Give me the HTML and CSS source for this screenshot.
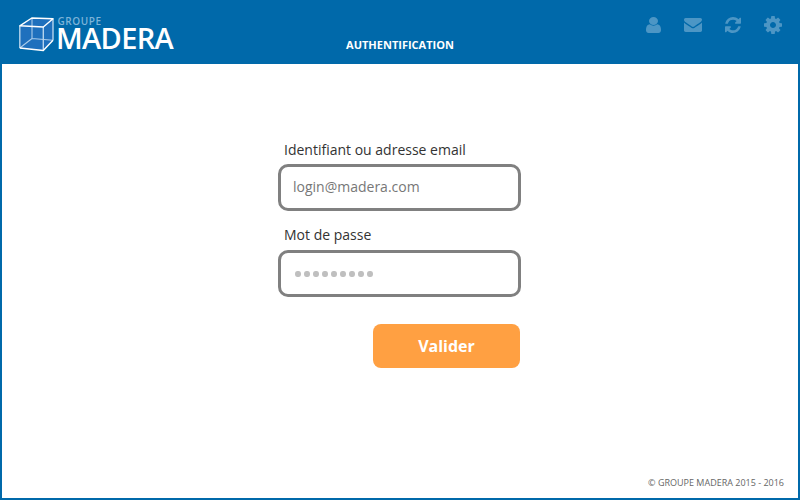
FILE: index.html
```html
<!DOCTYPE html>
<html lang="fr">
<head>
<meta charset="utf-8">
<title>Madera - Authentification</title>
<link rel="stylesheet" href="styles.css">
</head>
<body>
<div class="app">
  <header class="header">
    <div class="logo">
      <svg class="cube" viewBox="0 0 36 36">
        <path class="cube-fill" d="M1.800 9.800 13.800 2 35 2.800V24.200L25 34.500 1.800 32Z"/>
        <path class="cube-back" d="M14 2V22.500M1.800 32 14 22.500 35 24.200"/>
        <path class="cube-side" d="M1.800 9.800V32M25.300 11V34.500M35 2.800V24.200"/>
        <path class="cube-front" d="M1.800 9.800 13.800 2 35 2.800 25.300 11ZM1.800 32 25.300 34.500 35 24.200"/>
      </svg>
      <div class="brand">
        <span class="brand-group">GROUPE</span>
        <span class="brand-name">MADERA</span>
      </div>
    </div>
    <h1 class="title">AUTHENTIFICATION</h1>
    <nav class="tools">
      <svg class="icon icon-user" viewBox="256 128 1280 1536" preserveAspectRatio="none"><path d="M1536 1399q0 109-62.500 187t-150.500 78h-854q-88 0-150.500-78t-62.500-187q0-85 8.500-160.500t31.500-152 58.500-131 94-89 134.500-34.500q131 128 313 128t313-128q76 0 134.500 34.500t94 89 58.500 131 31.500 152 8.500 160.500zm-256-887q0 159-112.500 271.500t-271.500 112.500-271.500-112.500-112.500-271.500 112.500-271.500 271.500-112.500 271.500 112.500 112.500 271.500z"/></svg>
      <svg class="icon icon-mail" viewBox="0 256 1792 1408" preserveAspectRatio="none"><path d="M1792 710v794q0 66-47 113t-113 47h-1472q-66 0-113-47t-47-113v-794q44 49 101 87 362 246 497 345 57 42 92.500 65.500t94.500 48 110 24.500h2q51 0 110-24.500t94.500-48 92.500-65.500q170-123 498-345 57-39 100-87zm0-294q0 79-49 151t-122 123q-376 261-468 325-10 7-42.500 31t-54 38.500-52 32.500-57.500 27-50 9h-2q-23 0-50-9t-57.500-27-52-32.500-54-38.500-42.500-31q-91-64-262-182.500t-205-142.500q-62-42-117-115.500t-55-136.500q0-78 41.500-130t118.500-52h1472q65 0 112.500 47t47.500 113z"/></svg>
      <svg class="icon icon-sync" viewBox="128 128 1536 1536"><path d="M1639 1056q0 5-1 7-64 268-268 434.500t-478 166.500q-146 0-282.500-55t-243.500-157l-129 129q-19 19-45 19t-45-19-19-45v-448q0-26 19-45t45-19h448q26 0 45 19t19 45-19 45l-137 137q71 66 161 102t187 36q134 0 250-65t186-179q11-17 53-117 8-23 30-23h192q13 0 22.500 9.500t9.500 22.500zm25-800v448q0 26-19 45t-45 19h-448q-26 0-45-19t-19-45 19-45l138-138q-148-137-349-137-134 0-250 65t-186 179q-11 17-53 117-8 23-30 23h-199q-13 0-22.500-9.500t-9.500-22.500v-7q65-268 270-434.500t480-166.500q146 0 284 55.500t245 156.500l130-129q19-19 45-19t45 19 19 45z"/></svg>
      <svg class="icon icon-gear" viewBox="128 128 1536 1536"><path d="M1152 896q0-106-75-181t-181-75-181 75-75 181 75 181 181 75 181-75 75-181zm512-109v222q0 12-8 23t-20 13l-185 28q-19 54-39 91 35 50 107 138 10 12 10 25t-9 23q-27 37-99 108t-94 71q-12 0-26-9l-138-108q-44 23-91 38-16 136-29 186-7 28-36 28h-222q-14 0-24.500-8.500t-11.500-21.500l-28-184q-49-16-90-37l-141 107q-10 9-25 9-14 0-25-11-126-114-165-168-7-10-7-23 0-12 8-23 15-21 51-66.500t54-70.500q-27-50-41-99l-183-27q-13-2-21-12.500t-8-23.500v-222q0-12 8-23t19-13l186-28q14-46 39-92-40-57-107-138-10-12-10-24 0-10 9-23 26-36 98.500-107.500t94.500-71.500q13 0 26 10l138 107q44-23 91-38 16-136 29-186 7-28 36-28h222q14 0 24.500 8.500t11.500 21.500l28 184q49 16 90 37l142-107q9-9 24-9 13 0 25 10 129 119 165 170 7 8 7 22 0 12-8 23-15 21-51 66.500t-54 70.500q26 50 41 98l183 28q13 2 21 12.500t8 23.500z"/></svg>
    </nav>
  </header>
  <main class="main">
    <form class="form">
      <label class="label" for="login">Identifiant ou adresse email</label>
      <input class="field" id="login" type="text" placeholder="login@madera.com">
      <label class="label label-password" for="password">Mot de passe</label>
      <div class="field field-password" id="password">
        <i class="dot"></i><i class="dot"></i><i class="dot"></i><i class="dot"></i><i class="dot"></i><i class="dot"></i><i class="dot"></i><i class="dot"></i><i class="dot"></i>
      </div>
      <button class="submit" type="button">Valider</button>
    </form>
  </main>
  <footer class="footer">© GROUPE MADERA 2015 - 2016</footer>
</div>
</body>
</html>
```
FILE: styles.css
```css
* {
  box-sizing: border-box;
}

body {
  margin: 0;
  font-family: "Open Sans", sans-serif;
  background: #fff;
}

.app {
  display: flex;
  flex-direction: column;
  width: 800px;
  height: 500px;
  border: 2px solid #0069aa;
  border-top: 0;
}

.header {
  display: grid;
  grid-template-columns: 1fr auto 1fr;
  height: 64px;
  padding: 0 16px;
  background: #0069aa;
  color: #fff;
}

.logo {
  display: flex;
  align-items: flex-start;
  padding-top: 16px;
}

.cube {
  width: 36px;
  height: 36px;
  flex: none;
  fill: none;
  stroke-linejoin: round;
}

.cube-fill {
  fill: #1f70bd;
}

.cube-back {
  stroke: #a9cbea;
  stroke-width: 1.1;
}

.cube-side {
  stroke: #b5d3ec;
  stroke-width: 1.4;
}

.cube-front {
  stroke: #fff;
  stroke-width: 1.4;
}

.brand {
  display: flex;
  flex-direction: column;
  padding-left: 2px;
}

.brand-group {
  padding-left: 1.5px;
  font-size: 10px;
  font-weight: 600;
  line-height: 11px;
  letter-spacing: 0.6px;
  color: #7db4d8;
}

.brand-name {
  font-size: 29px;
  font-weight: 600;
  line-height: 22px;
  letter-spacing: -0.65px;
}

.title {
  margin: 37px 0 0;
  font-size: 11px;
  font-weight: 700;
  line-height: 16px;
}

.tools {
  display: flex;
  justify-content: flex-end;
  align-items: center;
  height: 50px;
}

.icon {
  fill: #4c96c5;
}

.icon-user {
  width: 15px;
  height: 16px;
}

.icon-mail {
  width: 18px;
  height: 14px;
  margin-left: 23px;
}

.icon-sync {
  width: 16px;
  height: 16px;
  margin-left: 23px;
}

.icon-gear {
  width: 18px;
  height: 18px;
  margin-left: 23px;
}

.main {
  flex: 1;
  display: flex;
  justify-content: center;
  padding-top: 75px;
}

.form {
  display: flex;
  flex-direction: column;
  width: 243px;
  margin-right: 1px;
}

.label {
  padding-left: 6px;
  margin-bottom: 4px;
  font-size: 14px;
  line-height: 21px;
  color: #333;
}

.label-password {
  margin-bottom: 5px;
}

.field {
  width: 243px;
  height: 47px;
  margin-bottom: 13px;
  padding: 0 12px 2px;
  border: 3px solid #808080;
  border-radius: 10px;
  background: #fff;
  font-family: inherit;
  font-size: 14px;
}

.field::placeholder {
  color: #777;
  opacity: 1;
}

.field-password {
  display: flex;
  align-items: center;
  gap: 3.5px;
  margin-bottom: 27px;
  padding: 1px 14px 0;
}

.dot {
  width: 5.5px;
  height: 6.5px;
  border-radius: 50%;
  background: #bfbfbf;
}

.submit {
  align-self: flex-end;
  width: 147px;
  height: 44px;
  margin-right: 1px;
  padding: 0;
  border: 0;
  border-radius: 8px;
  background: #ffa042;
  color: #fff;
  font-family: inherit;
  font-size: 16px;
  font-weight: 700;
}

.footer {
  padding: 0 14px 9px;
  font-size: 9px;
  line-height: 13px;
  text-align: right;
  color: #666;
}
```
